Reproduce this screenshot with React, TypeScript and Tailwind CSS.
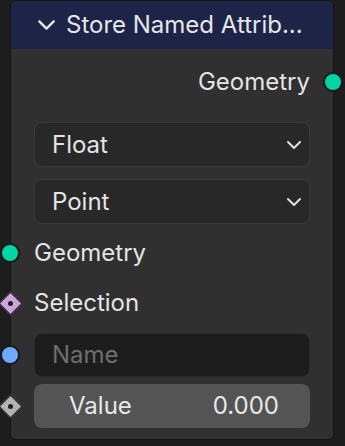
import React from "react";

const font = { fontFamily: "Inter, 'Noto Sans', sans-serif" };

const Chevron = ({ className }: { className?: string }) => (
  <svg viewBox="0 0 16 10" className={className} fill="none">
    <path d="M2 2 L8 8 L14 2" stroke="currentColor" strokeWidth="2" strokeLinecap="round" strokeLinejoin="round" />
  </svg>
);

const Circle = ({ color }: { color: string }) => (
  <span
    className="block h-[20px] w-[20px] rounded-full border-2 border-[#1a1a1a]"
    style={{ backgroundColor: color }}
  />
);

const Diamond = ({ color }: { color: string }) => (
  <span className="relative flex h-[24px] w-[24px] items-center justify-center">
    <span
      className="block h-[17px] w-[17px] shrink-0 rotate-45 border border-[#1a1a1a]"
      style={{ backgroundColor: color }}
    />
    <span className="absolute h-[5px] w-[5px] rounded-full bg-[#1e1e1e]" />
  </span>
);

const Dropdown = ({ label }: { label: string }) => (
  <div className="flex h-[45px] items-center justify-between rounded-[8px] border border-[#3b3b3b] bg-[#282828] pl-[17px] pr-[7px]">
    <span className="text-[24px] text-[#e4e4e4]">{label}</span>
    <Chevron className="h-[10px] w-[16px] text-[#e0e0e0]" />
  </div>
);

export default function App() {
  return (
    <div className="h-[446px] w-[345px] overflow-hidden bg-[#1d1d1d] pl-[10px] pr-[11px]" style={font}>
      <div className="relative h-[440px] rounded-[6px] border border-[#151515] bg-[#303030]">
        {/* header */}
        <div className="flex h-[48px] items-center gap-[9px] rounded-t-[6px] bg-[#1d2447] pl-[25px]">
          <Chevron className="h-[12px] w-[21px] text-[#e6e6e6]" />
          <span className="whitespace-nowrap text-[24px] text-[#e6e6e6]">Store Named Attrib...</span>
        </div>

        <div className="flex flex-col px-[23px]">
          {/* output */}
          <div className="relative mt-[18px] flex h-[30px] items-center justify-end">
            <span className="text-[24px] text-[#e4e4e4]">Geometry</span>
            <span className="absolute -right-[33px] top-[5px]">
              <Circle color="#00d6a3" />
            </span>
          </div>

          <div className="mt-[25px]">
            <Dropdown label="Float" />
          </div>
          <div className="mt-[12px]">
            <Dropdown label="Point" />
          </div>

          {/* inputs */}
          <div className="relative mt-[14px] flex h-[30px] items-center">
            <span className="absolute -left-[34px] top-[5px]">
              <Circle color="#00d6a3" />
            </span>
            <span className="text-[24px] text-[#e4e4e4]">Geometry</span>
          </div>

          <div className="relative mt-[20px] flex h-[30px] items-center">
            <span className="absolute -left-[36px] top-[3px]">
              <Diamond color="#cda5dd" />
            </span>
            <span className="text-[24px] text-[#e4e4e4]">Selection</span>
          </div>

          <div className="relative mt-[15px]">
            <span className="absolute -left-[34px] top-[12px]">
              <Circle color="#6ca9ff" />
            </span>
            <div className="flex h-[44px] items-center rounded-[8px] border border-[#2a2a2a] bg-[#1d1d1d] pl-[17px]">
              <span className="text-[24px] text-[#6e6e6e]">Name</span>
            </div>
          </div>

          <div className="relative mt-[7px]">
            <span className="absolute -left-[36px] top-[10px]">
              <Diamond color="#b3b3b3" />
            </span>
            <div className="flex h-[44px] items-center justify-between rounded-[8px] bg-[#545454] pl-[35px] pr-[31px]">
              <span className="text-[24px] text-[#e8e8e8]">Value</span>
              <span className="text-[24px] text-[#e8e8e8]">0.000</span>
            </div>
          </div>
        </div>
      </div>
    </div>
  );
}
